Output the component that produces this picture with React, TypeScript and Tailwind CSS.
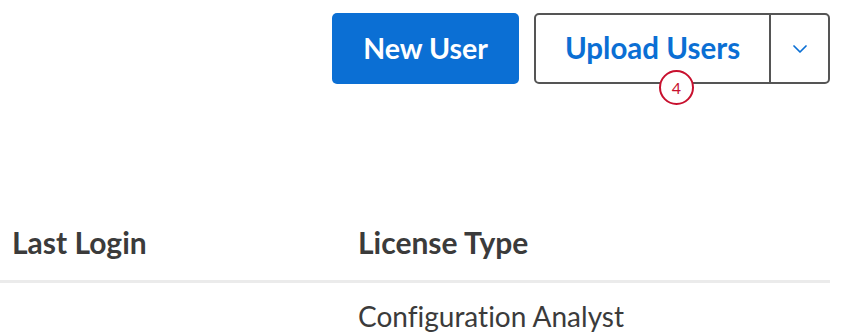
import { ChevronDown } from "lucide-react";

const font = { fontFamily: "Lato, 'Noto Sans', sans-serif" };

/** Bouton scindé avec menu déroulant */
function UploadButton() {
  return (
    <div className="relative flex h-[71px] w-[296px] rounded-[5px] border-2 border-[#555555] bg-white">
      <button className="flex flex-1 items-center justify-center text-[29.5px] font-bold text-[#0b6fd4]">
        Upload Users
      </button>
      <div className="w-[2px] bg-[#555555]" />
      <button className="flex w-[57px] items-center justify-center text-[#0b6fd4]">
        <ChevronDown size={24} strokeWidth={1.75} />
      </button>
      {/* Step badge */}
      <span className="absolute left-[123px] top-[55px] flex h-[35px] w-[35px] items-center justify-center rounded-full border-2 border-[#c8102e] bg-white text-[16px] text-[#c8102e]">
        4
      </span>
    </div>
  );
}

export default function App() {
  return (
    <div className="h-[335px] w-[850px] overflow-hidden bg-white [font-variant-ligatures:none]" style={font}>
      {/* Actions */}
      <div className="flex justify-end gap-[15px] pr-[20px] pt-[13px]">
        <button className="h-[71px] w-[187px] rounded-[5px] bg-[#0b6fd4] text-[28.5px] font-bold text-white">
          New User
        </button>
        <UploadButton />
      </div>

      {/* Table */}
      <div className="mr-[20px] mt-[120px]">
        <div className="flex h-[79px] items-center border-b-[3px] border-[#ebebeb] text-[30px] font-bold text-[#3b3b3b]">
          <div className="w-[358px] pl-[12px]">Last Login</div>
          <div>License Type</div>
        </div>
        <div className="flex h-[66px] items-center text-[28px] text-[#3b3b3b]">
          <div className="w-[358px]" />
          <div>Configuration Analyst</div>
        </div>
      </div>
    </div>
  );
}
